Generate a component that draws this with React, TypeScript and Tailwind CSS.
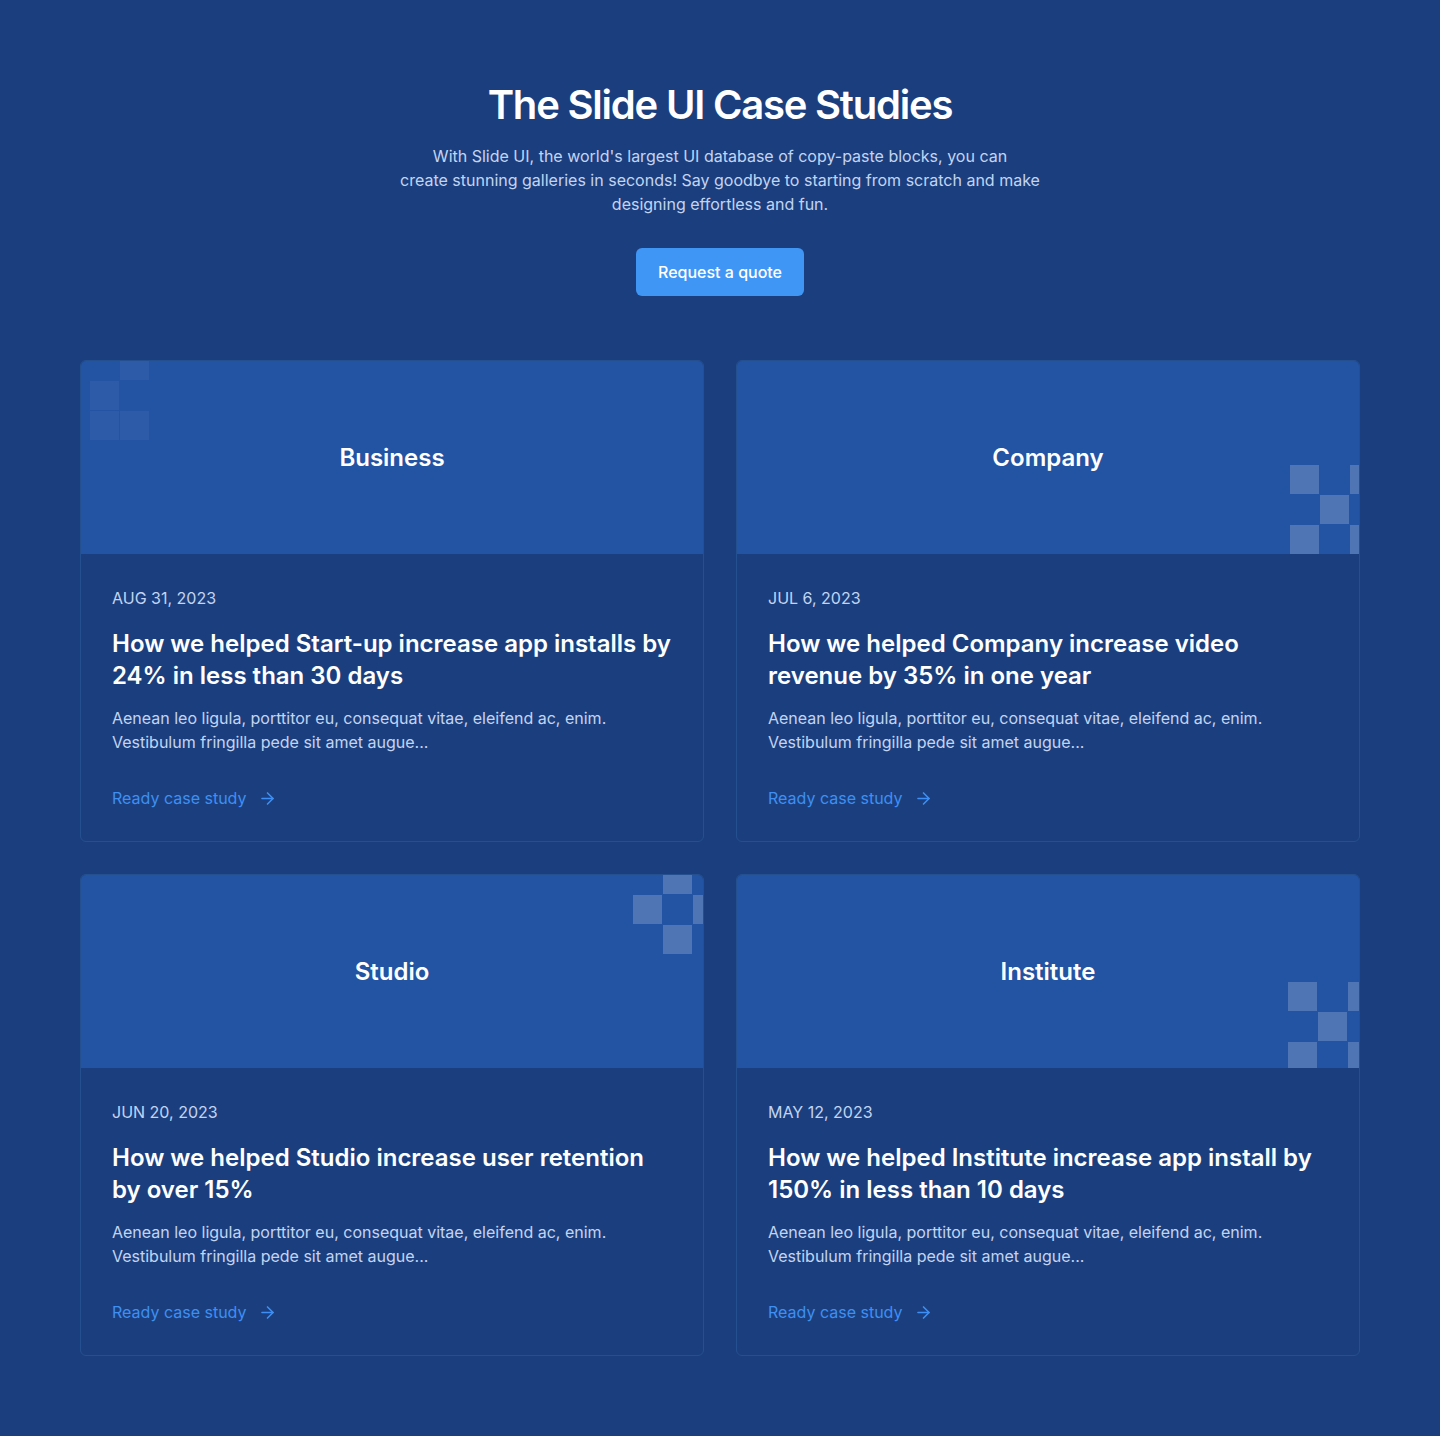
import { ArrowRight } from "lucide-react";

type Deco = "tl" | "br" | "tr" | "br2";

const studies: { tag: string; date: string; title: string; deco: Deco }[] = [
  { tag: "Business", date: "AUG 31, 2023", title: "How we helped Start-up increase app installs by 24% in less than 30 days", deco: "tl" },
  { tag: "Company", date: "JUL 6, 2023", title: "How we helped Company increase video revenue by 35% in one year", deco: "br" },
  { tag: "Studio", date: "JUN 20, 2023", title: "How we helped Studio increase user retention by over 15%", deco: "tr" },
  { tag: "Institute", date: "MAY 12, 2023", title: "How we helped Institute increase app install by 150% in less than 10 days", deco: "br2" },
];

// checker squares drawn over the card header
function Checker({ cells, op }: { cells: [number, number][]; op: number }) {
  return (
    <svg width="90" height="90" viewBox="0 0 90 90">
      {cells.map(([c, r]) => (
        <rect key={`${c}-${r}`} x={c * 30} y={r * 30} width="29" height="29" fill="white" fillOpacity={op} />
      ))}
    </svg>
  );
}

function Decoration({ kind }: { kind: Deco }) {
  if (kind === "tl")
    return (
      <div className="absolute left-[9px] top-[-10px]">
        <Checker op={0.05} cells={[[1, 0], [0, 1], [1, 2], [0, 2]]} />
      </div>
    );
  if (kind === "br")
    return (
      <div className="absolute right-[-21px] bottom-[-1px]">
        <Checker op={0.2} cells={[[0, 0], [2, 0], [1, 1], [0, 2], [2, 2]]} />
      </div>
    );
  if (kind === "tr")
    return (
      <div className="absolute right-[-20px] top-[-10px]">
        <Checker op={0.2} cells={[[1, 0], [0, 1], [2, 1], [1, 2]]} />
      </div>
    );
  return (
    <div className="absolute right-[-19px] bottom-[-4px]">
      <Checker op={0.2} cells={[[0, 0], [2, 0], [1, 1], [0, 2], [2, 2]]} />
    </div>
  );
}

export default function App() {
  return (
    <div className="min-h-[1436px] w-full bg-[#1b3f7e] text-white" style={{ fontFamily: "Inter, 'Noto Sans', sans-serif" }}>
      <div className="mx-auto w-[1280px] pt-[81px] pb-20">
        {/* Heading */}
        <div className="flex flex-col items-center text-center">
          <h1 className="text-[40px] font-semibold leading-[48px] tracking-[-0.03em] text-white">The Slide UI Case Studies</h1>
          <p className="mt-[15px] w-[660px] text-base leading-6 text-[#c3d4f2]">
            With Slide UI, the world's largest UI database of copy-paste blocks, you can
            <br />
            create stunning galleries in seconds! Say goodbye to starting from scratch and make designing effortless and fun.
          </p>
          <button className="mt-8 h-12 rounded-md bg-[#4096f5] px-[22px] text-base font-medium text-white">Request a quote</button>
        </div>

        {/* Cards */}
        <div className="mt-16 grid grid-cols-2 gap-8">
          {studies.map((s) => (
            <div key={s.tag} className="overflow-hidden rounded-md border border-[#25508f] bg-[#1b3f7e]">
              <div className="relative flex h-[193px] items-center justify-center overflow-hidden bg-[#2353a3]">
                <Decoration kind={s.deco} />
                <span className="relative text-2xl font-semibold text-white">{s.tag}</span>
              </div>
              <div className="px-[31px] pt-8 pb-[31px]">
                <div className="text-base leading-6 text-[#c3d4f2]">{s.date}</div>
                <h3 className="mt-[18px] text-2xl font-semibold leading-8 text-white">{s.title}</h3>
                <p className="mt-[14px] text-base leading-6 text-[#c3d4f2]">
                  Aenean leo ligula, porttitor eu, consequat vitae, eleifend ac, enim. Vestibulum fringilla pede sit amet augue...
                </p>
                <a href="#" className="mt-8 flex items-center gap-3 text-base leading-6 text-[#3e8ff3]">
                  Ready case study
                  <ArrowRight className="h-[19px] w-[19px]" strokeWidth={2} />
                </a>
              </div>
            </div>
          ))}
        </div>
      </div>
    </div>
  );
}
